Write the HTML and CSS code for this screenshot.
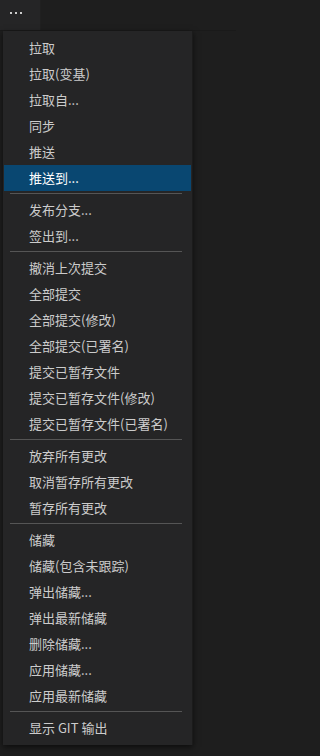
FILE: index.html
```html
<!DOCTYPE html>
<html lang="zh-CN">
<head>
<meta charset="utf-8">
<link rel="stylesheet" href="styles.css">
</head>
<body>
<div class="topbar">
  <div class="tab"><span class="dots"><i></i><i></i><i></i></span></div>
</div>
<div class="menu">
  <div class="item">拉取</div>
  <div class="item">拉取(变基)</div>
  <div class="item">拉取自...</div>
  <div class="item">同步</div>
  <div class="item">推送</div>
  <div class="item active">推送到...</div>
  <div class="sep"></div>
  <div class="item">发布分支...</div>
  <div class="item">签出到...</div>
  <div class="sep"></div>
  <div class="item">撤消上次提交</div>
  <div class="item">全部提交</div>
  <div class="item">全部提交(修改)</div>
  <div class="item">全部提交(已署名)</div>
  <div class="item">提交已暂存文件</div>
  <div class="item">提交已暂存文件(修改)</div>
  <div class="item">提交已暂存文件(已署名)</div>
  <div class="sep"></div>
  <div class="item">放弃所有更改</div>
  <div class="item">取消暂存所有更改</div>
  <div class="item">暂存所有更改</div>
  <div class="sep"></div>
  <div class="item">储藏</div>
  <div class="item">储藏(包含未跟踪)</div>
  <div class="item">弹出储藏...</div>
  <div class="item">弹出最新储藏</div>
  <div class="item">删除储藏...</div>
  <div class="item">应用储藏...</div>
  <div class="item">应用最新储藏</div>
  <div class="sep"></div>
  <div class="item">显示 GIT 输出</div>
</div>
</body>
</html>
```
FILE: styles.css
```css
html, body {
  margin: 0;
  padding: 0;
  background: #1e1e1e;
  width: 236px;
  height: 756px;
  overflow: hidden;
  font-family: "Noto Sans CJK SC", "Noto Sans", sans-serif;
}
.topbar {
  height: 30px;
  display: flex;
  border-bottom: 1px solid #1a1a1a;
}
.tab {
  width: 40px;
  height: 30px;
  background: #252526;
  border-right: 1px solid #202020;
  display: flex;
  align-items: flex-start;
}
.dots {
  display: flex;
  gap: 3px;
  margin-left: 10px;
  margin-top: 12px;
}
.dots i {
  display: block;
  width: 2px;
  height: 2px;
  background: #cccccc;
}
.menu {
  position: absolute;
  left: 3px;
  top: 31px;
  width: 190px;
  box-sizing: border-box;
  padding: 4px 1px;
  background: #252526;
  box-shadow: 0 2px 6px rgba(0, 0, 0, 0.6);
  border-right: 1px solid #1b1b1b;
}
.item {
  height: 26px;
  line-height: 26px;
  padding-left: 25px;
  color: #cccccc;
  font-size: 13px;
  white-space: nowrap;
}
.item.active {
  background: #094771;
  color: #ffffff;
}
.sep {
  height: 6px;
  box-sizing: border-box;
  padding-top: 2px;
  margin: 0 9px 0 6px;
}
.sep::before {
  content: "";
  display: block;
  height: 1px;
  background: #555555;
}
```
